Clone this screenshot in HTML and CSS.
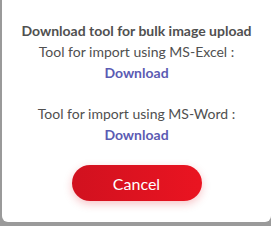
FILE: index.html
```html
<!DOCTYPE html>
<html lang="en">
<head>
    <meta charset="UTF-8">
    <meta name="viewport" content="width=device-width, initial-scale=1.0">
    <title>Bulk image upload</title>
    <link rel="stylesheet" href="styles.css">
</head>
<body>
    <div class="modal">
        <p class="title">Download tool for bulk image upload</p>
        <div class="tool">
            <p>Tool for import using MS-Excel :</p>
            <a href="#" class="dl">Download</a>
        </div>
        <div class="tool second">
            <p>Tool for import using MS-Word :</p>
            <a href="#" class="dl">Download</a>
        </div>
        <button class="cancel_btn">Cancel</button>
    </div>
</body>
</html>
```

FILE: styles.css
```css
html, body {
    margin: 0;
    height: 100%;
}
body {
    background-color: #9a9a9a;
    font-family: Lato, "Open Sans", sans-serif;
    overflow: hidden;
}
.modal {
    margin-left: 2px;
    width: 269px;
    height: 222px;
    background-color: #fff;
    border-radius: 0 0 6px 6px;
    display: flex;
    flex-direction: column;
    align-items: center;
    text-align: center;
    padding-top: 20px;
    box-sizing: border-box;
    color: #505050;
}
.title {
    margin: 0;
    font-size: 14px;
    font-weight: bold;
    line-height: 21px;
}
.tool p {
    margin: 0;
    font-size: 14px;
    line-height: 21px;
}
.second {
    margin-top: 20px;
}
.dl {
    display: block;
    font-size: 14px;
    font-weight: bold;
    line-height: 21px;
    color: #5b5bb3;
    text-decoration: none;
}
.cancel_btn {
    margin-top: 20px;
    width: 130px;
    height: 36px;
    border: none;
    border-radius: 18px;
    background: linear-gradient(to right, #d1111f, #ea1421);
    color: #fff;
    font-family: Lato, sans-serif;
    font-size: 16px;
    box-shadow: 0 3px 8px rgba(225, 20, 30, 0.25);
}
```
